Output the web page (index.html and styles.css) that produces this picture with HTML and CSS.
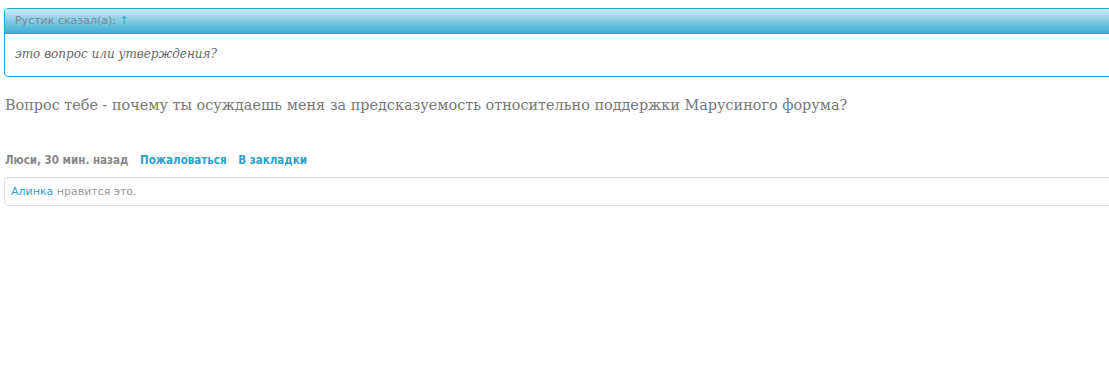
FILE: index.html
```html
<!DOCTYPE html>
<html lang="ru">
<head>
  <meta charset="UTF-8">
  <title>Сообщение</title>
  <link rel="stylesheet" href="styles.css">
</head>
<body>

  <div class="post">
    <!-- Quote -->
    <div class="quote">
      <div class="quote-head">Рустик сказал(а): <a href="#">↑</a></div>
      <div class="quote-body">это вопрос или утверждения?</div>
    </div>

    <div class="message">Вопрос тебе - почему ты осуждаешь меня за предсказуемость относительно поддержки Марусиного форума?</div>

    <div class="meta">
      <span>Люси, 30 мин. назад</span>
      <a href="#">Пожаловаться</a>
      <a href="#">В закладки</a>
    </div>

    <div class="likes"><a href="#">Алинка</a> нравится это.</div>
  </div>

</body>
</html>
```

FILE: styles.css
```css
body {
  margin: 0;
  padding: 8px 0 0 4px;
  background: #fff;
  overflow: hidden;
  font-family: 'DejaVu Sans', Verdana, sans-serif;
}

a {
  color: #2d9fcf;
  text-decoration: none;
}

.post {
  width: calc(100% + 20px);
}

.quote {
  border: 1px solid #1ea7d4;
  border-radius: 4px;
  overflow: hidden;
}

.quote-head {
  height: 24px;
  line-height: 24px;
  padding-left: 10px;
  font-size: 11px;
  color: #7b8a92;
  background: linear-gradient(#c9e9f5, #40add3);
  border-bottom: 1px solid #2aa2cb;
}

.quote-body {
  padding: 13px 0 15px 10px;
  font-family: 'DejaVu Serif', Georgia, serif;
  font-style: italic;
  font-size: 12px;
  color: #666;
}

.message {
  margin-top: 20px;
  padding-left: 1px;
  font-family: 'DejaVu Serif', Georgia, serif;
  font-size: 14.4px;
  color: #777;
}

.meta {
  margin-top: 40px;
  padding-left: 1px;
  font-family: 'DejaVu Sans Condensed', 'DejaVu Sans', sans-serif;
  font-size: 11.5px;
  font-weight: bold;
  color: #888;
}

.meta a {
  margin-left: 8px;
}

.likes {
  margin-top: 10px;
  border: 1px solid #ddd;
  border-radius: 4px;
  padding: 7px 6px 7px;
  font-size: 11px;
  color: #999;
}
```
